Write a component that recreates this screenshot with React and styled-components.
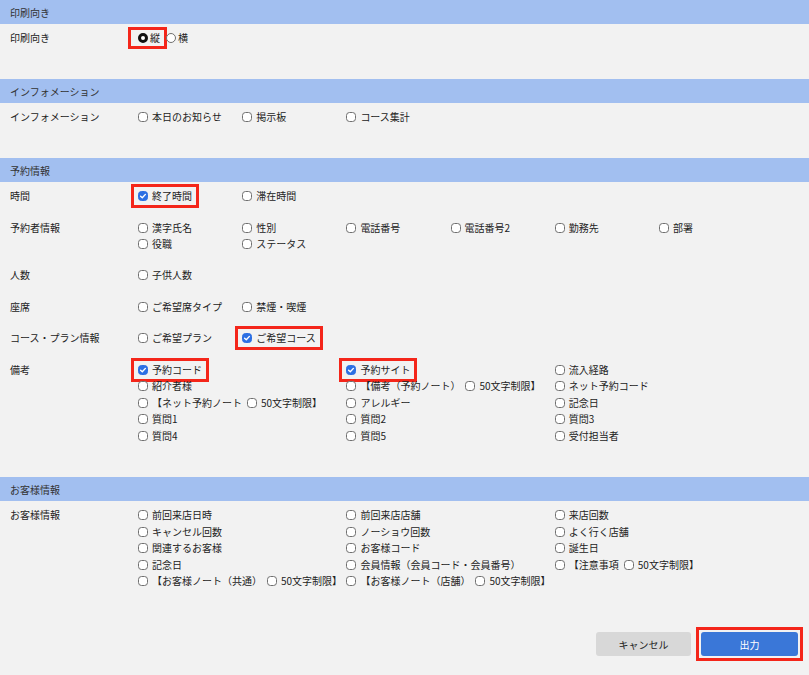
import React from 'react';
import styled, { createGlobalStyle, css } from 'styled-components';

const GlobalStyle = createGlobalStyle`
    html, body {
        margin: 0;
        padding: 0;
        background: #f2f2f2;
    }
    body {
        font-family: "Noto Sans CJK JP", "Noto Sans", sans-serif;
        font-size: 10px;
        color: #222;
    }
`;

const RED = '#f4261a';

const Page = styled.div`
    min-height: 100vh;
    background: #f2f2f2;
    display: flex;
    flex-direction: column;
`;

const SectionHead = styled.div`
    height: 24px;
    background: #a2bff0;
    padding-left: 10px;
    display: flex;
    align-items: center;
    color: #333;
`;

const SectionBody = styled.div`
    display: flex;
    flex-direction: column;
    gap: 15.5px;
    padding: 6px 0 33px;
`;

const Row = styled.div`
    display: grid;
    grid-template-columns: 138px 1fr;
    line-height: 16px;
`;

const Label = styled.div`
    padding-left: 10px;
    height: 16px;
`;

const Options = styled.div`
    display: grid;
    grid-template-columns: repeat(${p => p.$cols}, ${p => p.$w}px);
    grid-auto-rows: ${p => p.$lh}px;
    align-items: center;
`;

const Option = styled.span`
    display: inline-flex;
    align-items: center;
    justify-self: start;
    white-space: nowrap;
    height: 16px;
    ${p => p.$hl && css`
        outline: 3px solid ${RED};
        outline-offset: 1.5px;
        padding: 0 3px;
        margin: 0 -3px;
    `}
`;

const Part = styled.span`
    display: inline-flex;
    align-items: center;
    & + & {
        margin-left: 5px;
    }
`;

const Box = styled.span`
    flex: none;
    box-sizing: border-box;
    width: 10px;
    height: 10px;
    border-radius: 3.5px;
    border: 1px solid ${p => (p.$on ? '#2c6fe3' : '#707070')};
    background: ${p => (p.$on ? '#2c6fe3' : '#fff')};
    margin-right: 4px;
    display: flex;
    align-items: center;
    justify-content: center;
`;

const RadioGroup = styled.div`
    display: flex;
    align-items: center;
    height: 16px;
`;

const RadioItem = styled.span`
    display: inline-flex;
    align-items: center;
    height: 16px;
    ${p => p.$hl && css`
        outline: 3px solid ${RED};
        padding: 0 4px 0 7px;
        margin-left: -7px;
        margin-right: 2px;
    `}
`;

const Dot = styled.span`
    flex: none;
    box-sizing: border-box;
    width: 10px;
    height: 10px;
    border-radius: 50%;
    border: ${p => (p.$on ? '3px solid #111' : '1px solid #707070')};
    background: #fff;
    margin-right: 2px;
`;

const Footer = styled.div`
    display: flex;
    justify-content: flex-end;
    align-items: center;
    gap: 10px;
    padding: 9.5px 11px 0 0;
`;

const Mark = styled.span`
    display: flex;
    outline: 3px solid ${RED};
    outline-offset: 2.5px;
`;

const Button = styled.button`
    font: inherit;
    height: 24px;
    width: ${p => (p.$primary ? 97 : 95)}px;
    border: none;
    border-radius: 3px;
    background: ${p => (p.$primary ? '#3a77d8' : '#d8d8d8')};
    color: ${p => (p.$primary ? '#fff' : '#222')};
`;

const Tick = () => (
    <svg width="8" height="8" viewBox="0 0 8 8">
        <path d="M1.6 4.2 L3.3 5.8 L6.4 2.4" fill="none" stroke="#fff" strokeWidth="1.4" strokeLinecap="round" strokeLinejoin="round" />
    </svg>
);

const Check = ({ item }) => {
    const parts = item.parts || [item.text];
    return (
        <Option $hl={item.hl}>
            {parts.map((t, i) => (
                <Part key={i}>
                    <Box $on={item.on}>{item.on && <Tick />}</Box>
                    {t}
                </Part>
            ))}
        </Option>
    );
};

const c = (text, on, hl) => ({ text, on, hl });
const p2 = (a, b) => ({ parts: [a, b] });

const reserveRows = [
    { label: '時間', wide: false, items: [c('終了時間', true, true), c('滞在時間')] },
    {
        label: '予約者情報', wide: false,
        items: [c('漢字氏名'), c('性別'), c('電話番号'), c('電話番号2'), c('勤務先'), c('部署'), c('役職'), c('ステータス')],
    },
    { label: '人数', wide: false, items: [c('子供人数')] },
    { label: '座席', wide: false, items: [c('ご希望席タイプ'), c('禁煙・喫煙')] },
    { label: 'コース・プラン情報', wide: false, items: [c('ご希望プラン'), c('ご希望コース', true, true)] },
    {
        label: '備考', wide: true,
        items: [
            c('予約コード', true, true), c('予約サイト', true, true), c('流入経路'),
            c('紹介者様'), p2('【備考（予約ノート）', '50文字制限】'), c('ネット予約コード'),
            p2('【ネット予約ノート', '50文字制限】'), c('アレルギー'), c('記念日'),
            c('質問1'), c('質問2'), c('質問3'),
            c('質問4'), c('質問5'), c('受付担当者'),
        ],
    },
];

const customerRows = [
    {
        label: 'お客様情報', wide: true,
        items: [
            c('前回来店日時'), c('前回来店店舗'), c('来店回数'),
            c('キャンセル回数'), c('ノーショウ回数'), c('よく行く店舗'),
            c('関連するお客様'), c('お客様コード'), c('誕生日'),
            c('記念日'), c('会員情報（会員コード・会員番号）'), p2('【注意事項', '50文字制限】'),
            p2('【お客様ノート（共通）', '50文字制限】'), p2('【お客様ノート（店舗）', '50文字制限】'),
        ],
    },
];

const CheckRows = ({ rows }) =>
    rows.map(row => (
        <Row key={row.label}>
            <Label>{row.label}</Label>
            <Options $cols={row.wide ? 3 : 6} $w={row.wide ? 208.4 : 104.2} $lh={row.wide ? 16.5 : 16}>
                {row.items.map((item, i) => <Check key={i} item={item} />)}
            </Options>
        </Row>
    ));

const App = () => (
    <Page>
        <GlobalStyle />
        <SectionHead>印刷向き</SectionHead>
        <SectionBody>
            <Row>
                <Label>印刷向き</Label>
                <RadioGroup>
                    <RadioItem $hl><Dot $on />縦</RadioItem>
                    <RadioItem><Dot />横</RadioItem>
                </RadioGroup>
            </Row>
        </SectionBody>

        <SectionHead>インフォメーション</SectionHead>
        <SectionBody>
            <CheckRows rows={[{ label: 'インフォメーション', wide: false, items: [c('本日のお知らせ'), c('掲示板'), c('コース集計')] }]} />
        </SectionBody>

        <SectionHead>予約情報</SectionHead>
        <SectionBody>
            <CheckRows rows={reserveRows} />
        </SectionBody>

        <SectionHead>お客様情報</SectionHead>
        <SectionBody>
            <CheckRows rows={customerRows} />
        </SectionBody>

        <Footer>
            <Button>キャンセル</Button>
            <Mark>
                <Button $primary>出力</Button>
            </Mark>
        </Footer>
    </Page>
);

export default App;
